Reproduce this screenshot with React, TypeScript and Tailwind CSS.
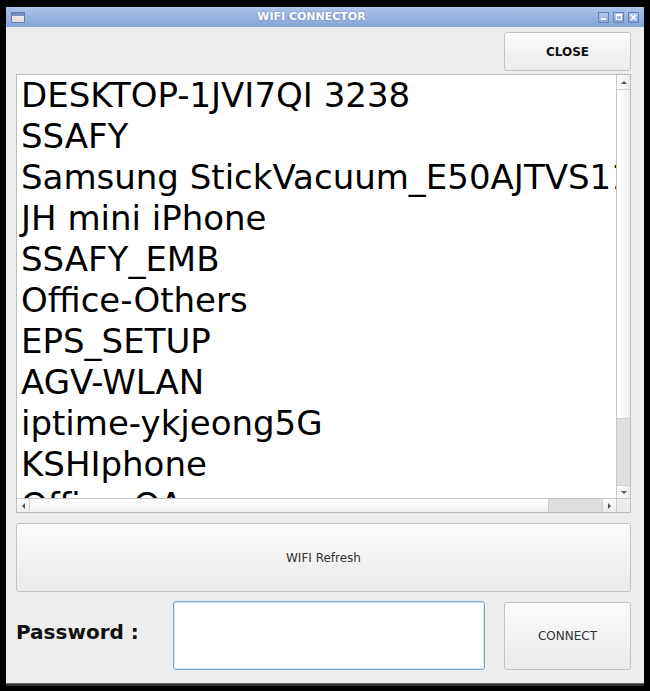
const networks = [
  'DESKTOP-1JVI7QI 3238',
  'SSAFY',
  'Samsung StickVacuum_E50AJTVS11',
  'JH mini iPhone',
  'SSAFY_EMB',
  'Office-Others',
  'EPS_SETUP',
  'AGV-WLAN',
  'iptime-ykjeong5G',
  'KSHIphone',
  'Office-OA',
];

const font = "font-['DejaVu_Sans',sans-serif]";

function TitleButton({ kind }: { kind: 'min' | 'max' | 'close' }) {
  return (
    <div className="w-[11px] h-[11px] border border-[#5f82b8] bg-gradient-to-b from-[#b5cbeb] to-[#88a8d9] flex items-center justify-center">
      {kind === 'min' && <div className="w-[5px] h-[2px] bg-white mt-[4px]" />}
      {kind === 'max' && <div className="w-[6px] h-[6px] border border-white border-t-2" />}
      {kind === 'close' && (
        <svg width="7" height="7" viewBox="0 0 7 7">
          <path d="M1 1 L6 6 M6 1 L1 6" stroke="white" strokeWidth="1.6" />
        </svg>
      )}
    </div>
  );
}

function Arrow({ dir }: { dir: 'up' | 'down' | 'left' | 'right' }) {
  const paths = {
    up: 'M1 4 L4 1 L7 4 Z',
    down: 'M1 1 L4 4 L7 1 Z',
    left: 'M4 1 L1 4 L4 7 Z',
    right: 'M1 1 L4 4 L1 7 Z',
  };
  const vertical = dir === 'up' || dir === 'down';
  return (
    <svg width={vertical ? 8 : 5} height={vertical ? 5 : 8} viewBox={vertical ? '0 0 8 5' : '0 0 5 8'}>
      <path d={paths[dir]} fill="#555" />
    </svg>
  );
}

const btn =
  'rounded-[3px] border border-[#c3c3c3] bg-gradient-to-b from-[#fbfbfb] to-[#ebebeb] shadow-[inset_0_1px_0_#ffffff] flex items-center justify-center';

export default function App() {
  return (
    <div className={`w-[650px] h-[691px] bg-black pt-[7px] pl-[6px] pr-[6px] pb-[5px] ${font}`}>
      <div className="h-full flex flex-col bg-[#ededed]">
        {/* title bar */}
        <div className="h-[20px] relative flex items-center bg-gradient-to-b from-[#aac4e9] to-[#85a6d8]">
          <div className="ml-[5px] w-[14px] h-[11px] border border-[#6a7f9c] bg-gradient-to-b from-[#f4f4f4] to-[#d9d9d9] flex flex-col">
            <div className="h-[3px] bg-[#6f8fc2]" />
          </div>
          <div className="flex-1 text-center text-white font-bold text-[11px] [text-shadow:0_0_2px_#5a78a8]">
            WIFI CONNECTOR
          </div>
          <div className="flex gap-[4px] mr-[5px]">
            <TitleButton kind="min" />
            <TitleButton kind="max" />
            <TitleButton kind="close" />
          </div>
        </div>

        {/* body */}
        <div className="flex-1 flex flex-col pl-[10px] pr-[13px] pt-[5px]">
          <div className="flex justify-end">
            <button className={`${btn} w-[127px] h-[39px] text-[12px] font-bold text-[#111]`}>CLOSE</button>
          </div>

          {/* network list */}
          <div className="mt-[3px] h-[439px] border border-[#bdbdbd] bg-white flex flex-col">
            <div className="flex-1 flex min-h-0">
              <div className="flex-1 overflow-hidden pl-[4px]">
                {networks.map((n) => (
                  <div key={n} className="h-[41px] leading-[41px] text-[34px] text-black whitespace-nowrap">
                    {n}
                  </div>
                ))}
              </div>
              <div className="w-[14px] flex flex-col border-l border-[#c8c8c8]">
                <div className="h-[15px] flex items-center justify-center bg-gradient-to-r from-[#fdfdfd] to-[#ececec] border-b border-[#d0d0d0]">
                  <Arrow dir="up" />
                </div>
                <div className="h-[329px] bg-gradient-to-r from-[#ffffff] to-[#efefef] border-b border-[#cfcfcf]" />
                <div className="flex-1 bg-[#dedede]" />
                <div className="h-[13px] flex items-center justify-center bg-gradient-to-r from-[#fdfdfd] to-[#ececec] border-t border-[#d0d0d0]">
                  <Arrow dir="down" />
                </div>
              </div>
            </div>
            <div className="h-[14px] flex border-t border-[#c8c8c8]">
              <div className="w-[13px] flex items-center justify-center bg-gradient-to-b from-[#fdfdfd] to-[#ececec] border-r border-[#d0d0d0]">
                <Arrow dir="left" />
              </div>
              <div className="w-[519px] bg-gradient-to-b from-[#ffffff] to-[#efefef] border-r border-[#cfcfcf]" />
              <div className="flex-1 bg-[#dedede]" />
              <div className="w-[14px] flex items-center justify-center bg-gradient-to-b from-[#fdfdfd] to-[#ececec] border-l border-[#d0d0d0]">
                <Arrow dir="right" />
              </div>
              <div className="w-[14px] bg-[#ededed] border-l border-[#c8c8c8]" />
            </div>
          </div>

          <button className={`${btn} mt-[10px] h-[69px] text-[12px] text-[#333]`}>WIFI Refresh</button>

          <div className="mt-[9px] h-[69px] flex items-center">
            <div className="w-[157px] text-[20px] font-bold text-[#111] pb-[8px]">Password :</div>
            <input
              type="password"
              className="w-[312px] h-[69px] rounded-[3px] border border-[#7ea6cb] bg-white outline-none shadow-[inset_0_0_0_1px_#d6e4f1]"
            />
            <button className={`${btn} ml-[19px] w-[127px] h-[68px] text-[12px] text-[#333]`}>CONNECT</button>
          </div>
        </div>

        {/* bottom edge */}
        <div className="h-[3px] bg-[#2e2e2e] border-t border-[#6b6b6b]" />
      </div>
    </div>
  );
}
